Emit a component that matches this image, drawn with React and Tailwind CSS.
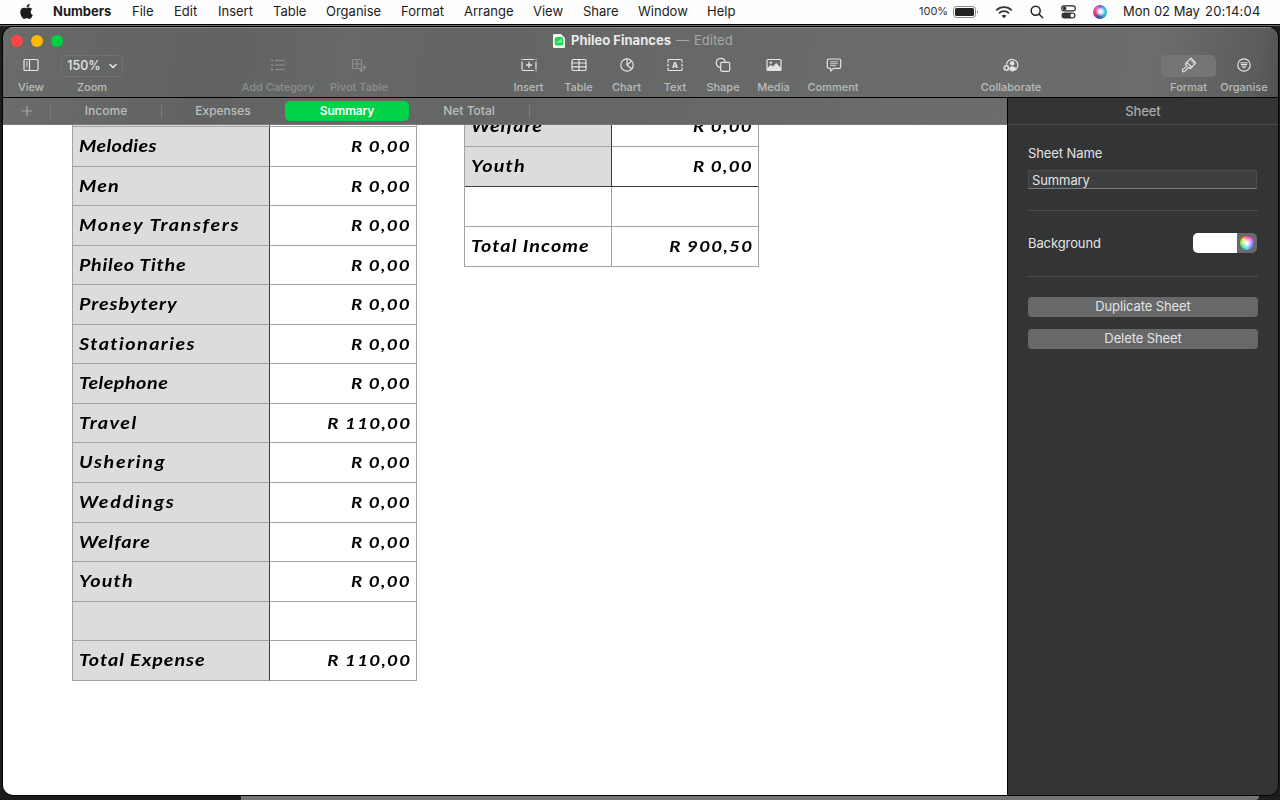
import React from 'react';
import { FaApple } from 'react-icons/fa';

const MENUS = [
    { label: 'File', width: 'w-[42px]' },
    { label: 'Edit', width: 'w-11' },
    { label: 'Insert', width: 'w-[55px]' },
    { label: 'Table', width: 'w-[53px]' },
    { label: 'Organise', width: 'w-[75px]' },
    { label: 'Format', width: 'w-[63px]' },
    { label: 'Arrange', width: 'w-[69px]' },
    { label: 'View', width: 'w-[50px]' },
    { label: 'Share', width: 'w-[55px]' },
    { label: 'Window', width: 'w-[69px]' },
    { label: 'Help', width: 'w-10' },
];

const EXPENSES = [
    { name: 'Melodies', amount: 'R 0,00', height: 'h-10', tracking: 'tracking-[0.3px]' },
    { name: 'Men', amount: 'R 0,00', height: 'h-[39px]', tracking: 'tracking-[1px]' },
    { name: 'Money Transfers', amount: 'R 0,00', height: 'h-10', tracking: 'tracking-[1.4px]' },
    { name: 'Phileo Tithe', amount: 'R 0,00', height: 'h-[39px]', tracking: 'tracking-[0.6px]' },
    { name: 'Presbytery', amount: 'R 0,00', height: 'h-10', tracking: 'tracking-[0.8px]' },
    { name: 'Stationaries', amount: 'R 0,00', height: 'h-[39px]', tracking: 'tracking-[1.2px]' },
    { name: 'Telephone', amount: 'R 0,00', height: 'h-10', tracking: 'tracking-[0.4px]' },
    { name: 'Travel', amount: 'R 110,00', height: 'h-[39px]', tracking: 'tracking-[1.2px]' },
    { name: 'Ushering', amount: 'R 0,00', height: 'h-10', tracking: 'tracking-[1.4px]' },
    { name: 'Weddings', amount: 'R 0,00', height: 'h-10', tracking: 'tracking-[1.5px]' },
    { name: 'Welfare', amount: 'R 0,00', height: 'h-[39px]', tracking: 'tracking-[0.8px]' },
    { name: 'Youth', amount: 'R 0,00', height: 'h-10', tracking: 'tracking-[1px]' },
    { name: '', amount: '', height: 'h-[39px]', tracking: '' },
    { name: 'Total Expense', amount: 'R 110,00', height: 'h-10', tracking: 'tracking-[0.8px]' },
];

const HAND = "font-['Bradley_Hand',Lato,sans-serif] leading-none font-bold italic text-black whitespace-pre";

function Icon({ children, className = 'mb-[2px]' }) {
    return (
        <svg
            width="18"
            height="18"
            viewBox="0 0 18 18"
            fill="none"
            stroke="currentColor"
            strokeWidth="1.2"
            strokeLinecap="round"
            strokeLinejoin="round"
            className={`shrink-0 ${className}`}
        >
            {children}
        </svg>
    );
}

function MenuBar() {
    return (
        <div className="flex h-6 items-center bg-[#fdfdfd] pb-px text-[13px] leading-none text-[#1c1c1c]">
            <FaApple className="ml-[19px] mb-px w-[15px] h-[17px] shrink-0" />
            <span className="ml-[19px] w-[79px] shrink-0 font-bold">Numbers</span>
            {MENUS.map((m) => (
                <span key={m.label} className={`${m.width} shrink-0 whitespace-nowrap`}>{m.label}</span>
            ))}
            <span className="ml-auto w-[34px] text-[11px] text-[#333]">100%</span>
            <svg width="26" height="12" viewBox="0 0 26 12" className="shrink-0">
                <rect x="0.5" y="0.5" width="22" height="11" rx="3" fill="none" stroke="#888" />
                <rect x="2" y="2" width="19" height="8" rx="1.6" fill="#222" />
                <path d="M24.2 4.2c1.2.4 1.2 3.2 0 3.6z" fill="#777" />
            </svg>
            <svg width="18" height="14" viewBox="0 0 18 14" fill="none" stroke="#333" strokeWidth="1.7" className="ml-4 shrink-0">
                <path d="M1.2 5.3a11 11 0 0 1 15.6 0M4 8.3a7 7 0 0 1 10 0" />
                <path d="M6.6 10.8a3.5 3.5 0 0 1 4.8 0L9 13.2z" fill="#333" stroke="none" />
            </svg>
            <svg width="14" height="14" viewBox="0 0 14 14" fill="none" stroke="#222" strokeWidth="1.5" strokeLinecap="round" className="ml-[17px] shrink-0">
                <circle cx="5.7" cy="5.7" r="4.5" />
                <path d="M9.2 9.2l3.5 3.5" />
            </svg>
            <svg width="15" height="14" viewBox="0 0 15 14" className="ml-[17px] shrink-0">
                <rect x="0.7" y="0.9" width="13.6" height="5" rx="2.5" fill="none" stroke="#222" strokeWidth="1.1" />
                <circle cx="3.6" cy="3.4" r="1.8" fill="#333" />
                <rect x="0.5" y="7.5" width="14" height="6" rx="3" fill="#333" />
                <circle cx="11.3" cy="10.5" r="1.9" fill="#eee" />
            </svg>
            <span className="ml-[17px] flex size-[14px] shrink-0 items-center justify-center rounded-full bg-[conic-gradient(#6f5bd0,#35a7e8_12%,#2cc7e0_28%,#2f8fb8_42%,#3a4f9e_54%,#c0307a_66%,#f0459a_80%,#e055b0_90%,#6f5bd0)]">
                <span className="size-[7px] rounded-full bg-[#f3f5ff] blur-[1px]" />
            </span>
            <span className="ml-4 w-[82px] shrink-0 whitespace-nowrap">Mon 02 May</span>
            <span className="w-[75px] shrink-0 whitespace-nowrap tracking-[0.2px]">20:14:04</span>
        </div>
    );
}

function Tool({ label, className, dim, boxed, children }) {
    return (
        <div className={`flex shrink-0 flex-col items-center ${className} ${dim ? 'text-[#8c8e8d]' : 'text-[#e4e4e4]'}`}>
            <div className={`flex h-[22px] w-full items-center justify-center rounded-[5px] ${boxed ? 'bg-[#747675]' : ''}`}>
                {children}
            </div>
            <span className={`mt-[4px] text-[11px] leading-[13px] font-medium whitespace-nowrap ${dim ? 'text-[#8c8e8d]' : 'text-[#b9bbba]'}`}>{label}</span>
        </div>
    );
}

function Toolbar() {
    return (
        <div className="flex h-[42px]">
            <Tool label="View" className="w-14">
                <Icon>
                    <rect x="2" y="3.5" width="14" height="11" rx="1" />
                    <path d="M7.5 3.5v11M4.3 6h1M4.300 8h1M4.300 10h1" />
                </Icon>
            </Tool>
            <Tool label="Zoom" className="w-[66px]">
                <div className="flex h-[22px] w-[62px] items-center justify-center gap-[8px] rounded-[5px] border border-[#727473] text-[12.500px] font-medium">
                    150%
                    <svg width="8" height="6" viewBox="0 0 8 6" fill="none" stroke="currentColor" strokeWidth="1.6" strokeLinecap="round" strokeLinejoin="round">
                        <path d="M1 1.5l3 3 3-3" />
                    </svg>
                </div>
            </Tool>
            <Tool label="Add Category" className="ml-[113px] w-20" dim>
                <Icon>
                    <path d="M6.5 4.5h9M6.5 9h9M6.5 13.5h9" />
                    <path d="M3 4.5h.2M3 9h.2M3 13.5h.2" strokeWidth="1.8" />
                </Icon>
            </Tool>
            <Tool label="Pivot Table" className="w-[82px]" dim>
                <Icon>
                    <rect x="2.5" y="3.5" width="9" height="9" rx="1" />
                    <path d="M7 3.5v9M2.5 8h9M14.5 10.500v1.500a2.500 2.500 0 0 1-2.500 2.500h-1.500M13.200 11.500l1.300-1.500 1.400 1.500M11.500 13.200l-1.500 1.300 1.500 1.400" />
                </Icon>
            </Tool>
            <Tool label="Insert" className="ml-[104px] w-[49px]">
                <Icon>
                    <path d="M3.5 3.5h10M16 3.500v.2M16 6v7M16 15v-.2M13.500 14.5H3.500A1.500 1.500 0 0 1 2 13V6M2 3.700v-.2" />
                    <path d="M9 6.5v5M6.500 9h5" strokeWidth="1.4" />
                </Icon>
            </Tool>
            <Tool label="Table" className="w-[51px]">
                <Icon>
                    <rect x="2" y="3.5" width="14" height="11" rx="1.2" />
                    <path d="M9 3.5v11M2 7h14M2 10.8h14" />
                </Icon>
            </Tool>
            <Tool label="Chart" className="w-[45px]">
                <Icon>
                    <circle cx="9" cy="9" r="6.2" />
                    <path d="M9 2.8V9l4.700 4M9 9l4.300-3.800" />
                </Icon>
            </Tool>
            <Tool label="Text" className="w-[52px]">
                <Icon className="-mr-[18px] mb-[2px]">
                    <path d="M2 6V4.5a1 1 0 0 1 1-1h12a1 1 0 0 1 1 1V6M16 8v2M16 12v1.5a1 1 0 0 1-1 1H3a1 1 0 0 1-1-1V12M2 10V8" />
                </Icon>
                <span className="mb-[2px] w-[18px] text-center text-[8px] leading-none font-bold">A</span>
            </Tool>
            <Tool label="Shape" className="w-11">
                <Icon>
                    <path d="M6.200 11.300A4.500 4.500 0 1 1 11.200 6" />
                    <rect x="6.7" y="6.3" width="9" height="9" rx="1.2" />
                </Icon>
            </Tool>
            <Tool label="Media" className="w-[57px]">
                <Icon>
                    <rect x="2" y="3.5" width="14" height="11" rx="1" />
                    <path d="M2.5 12l3.3-2.8 2 1.6 3.4-3.5 4.5 4.5v2.4H2.5z" fill="currentColor" strokeWidth="0.5" />
                    <circle cx="5.8" cy="6.7" r="0.9" fill="currentColor" strokeWidth="0.5" />
                </Icon>
            </Tool>
            <Tool label="Comment" className="w-[62px]">
                <Icon className="mb-[2px] ml-[2px]">
                    <path d="M4 3h10a1.7 1.7 0 0 1 1.700 1.700v6A1.700 1.700 0 0 1 14 12.400H8.500L5.700 15.200v-2.800H4a1.700 1.700 0 0 1-1.700-1.700v-6A1.700 1.700 0 0 1 4 3z" />
                    <path d="M5.5 5.8h7M5.5 7.7h7M5.5 9.6h5" strokeWidth="0.8" />
                </Icon>
            </Tool>
            <Tool label="Collaborate" className="ml-[111px] w-[72px]">
                <Icon>
                    <path d="M4.5 8.300a5.700 5.700 0 1 1 5 6.500" />
                    <circle cx="10.2" cy="7.2" r="2.2" fill="currentColor" stroke="none" />
                    <path d="M7.4 14.3c-.3-3 .8-4 2.8-4s3.6 1 4 2.4c-1.5 2-4 2.6-6.8 1.6z" fill="currentColor" stroke="none" />
                    <circle cx="4.4" cy="12" r="3" fill="currentColor" stroke="none" />
                    <path d="M4.4 10.5v3M2.9 12h3" stroke="#666867" strokeWidth="1" />
                </Icon>
            </Tool>
            <Tool label="Format" className="ml-[114px] w-[55px]" boxed>
                <Icon>
                    <path d="M11 2.300l4.700 4.600-3.900 4.200-5-4.700zM12.700 4l-1 1.200M14.200 5.500l-1.200 1.300" />
                    <path d="M6.800 6.400L5.300 8l1.800 1.900-4.300 3.500a1.400 1.400 0 0 0 2 2l4-4.200 1.700 1.500 1.300-1.600" />
                </Icon>
            </Tool>
            <Tool label="Organise" className="w-14">
                <Icon>
                    <circle cx="9" cy="9" r="6.2" />
                    <path d="M5.7 6.9h6.6M6.2 8.5h5.6M6.9 10.1h4.2M7.8 11.7h2.4" strokeWidth="1" />
                </Icon>
            </Tool>
        </div>
    );
}

function TitleBar() {
    return (
        <div className="flex h-7 items-center border-t border-[#8a8c8b] pb-px pl-2">
            <span className="size-3 rounded-full bg-[#ff4644]" />
            <span className="ml-2 size-3 rounded-full bg-[#fdb900]" />
            <span className="ml-2 size-3 rounded-full bg-[#00d13f]" />
            <svg width="12" height="14" viewBox="0 0 12 14" className="ml-[490px] shrink-0">
                <path d="M1 0h7l4 4v9a1 1 0 0 1-1 1H1a1 1 0 0 1-1-1V1a1 1 0 0 1 1-1z" fill="#f4f4f4" />
                <rect x="1.7" y="3" width="8.6" height="8.6" rx="2.5" fill="#12dc4e" />
                <path d="M4 9V7.5M6 9V6.3M8 9V5" stroke="#b9ffd0" strokeWidth="1" />
            </svg>
            <span className="ml-[6px] w-[105px] shrink-0 text-[13px] font-bold whitespace-nowrap text-[#e9e9e9]">Phileo Finances</span>
            <span className="w-[18px] shrink-0 text-[13px] text-[#a5a7a6]">—</span>
            <span className="text-[13px] text-[#a5a7a6]">Edited</span>
        </div>
    );
}

function SheetTabs() {
    return (
        <div className="flex h-[27px] items-center border-b border-[#777978] text-[12px] font-medium text-[#bcbebd]">
            <svg width="10" height="10" viewBox="0 0 10 10" stroke="#a9abaa" strokeWidth="1.2" className="ml-[19px] shrink-0">
                <path d="M5 0v10M0 5h10" />
            </svg>
            <span className="ml-[18px] h-[13px] w-px bg-[#7a7c7b]" />
            <span className="w-[110px] text-center">Income</span>
            <span className="h-[13px] w-px bg-[#7a7c7b]" />
            <span className="w-[122px] text-center">Expenses</span>
            <span className="ml-[1px] flex h-5 w-[124px] items-center justify-center rounded-[5px] bg-[#00d349] font-semibold tracking-[-0.2px] text-white">Summary</span>
            <span className="w-[120px] text-center">Net Total</span>
            <span className="h-[13px] w-px bg-[#7a7c7b]" />
        </div>
    );
}

function Name({ tracking, children }) {
    return (
        <span className={`${HAND} mb-[2px] origin-left scale-x-[1.165] text-[17px] ${tracking}`}>{children}</span>
    );
}

function Amount({ children }) {
    return (
        <span className={`${HAND} origin-right scale-x-125 text-[15px] tracking-[1px]`}>{children}</span>
    );
}

function ExpenseTable() {
    return (
        <div className="ml-[69px] w-[345px] shrink-0 self-start border-x border-[#a3a3a3]">
            <div className="flex h-[2px] border-b border-[#a3a3a3]">
                <div className="w-[197px] border-r border-[#3a3a3a] bg-[#dcdcdc]" />
            </div>
            {EXPENSES.map((row, i) => (
                <div key={i} className={`flex ${row.height}`}>
                    <div className="flex w-[197px] items-center border-r border-b border-r-[#3a3a3a] border-b-[#a3a3a3] bg-[#dcdcdc] pl-[6px]">
                        <Name tracking={row.tracking}>{row.name}</Name>
                    </div>
                    <div className="flex flex-1 items-center justify-end border-b border-[#a3a3a3] pr-[5px]">
                        <Amount>{row.amount}</Amount>
                    </div>
                </div>
            ))}
        </div>
    );
}

function IncomeTable() {
    return (
        <div className="ml-[47px] w-[295px] shrink-0 self-start border-x border-[#a3a3a3]">
            {/* scrolled halfway under the sheet tabs */}
            <div className="flex h-[22px] items-end overflow-hidden">
                <div className="flex h-10 w-[147px] shrink-0 items-center border-r border-b border-r-[#3a3a3a] border-b-[#a3a3a3] bg-[#dcdcdc] pl-[6px]">
                    <Name tracking="tracking-[0.8px]">Welfare</Name>
                </div>
                <div className="flex h-10 flex-1 items-center justify-end border-b border-[#a3a3a3] pr-[5px]">
                    <Amount>R 0,00</Amount>
                </div>
            </div>
            <div className="flex h-10 border-b border-[#3a3a3a]">
                <div className="flex w-[147px] items-center border-r border-[#3a3a3a] bg-[#dcdcdc] pl-[6px]">
                    <Name tracking="tracking-[1px]">Youth</Name>
                </div>
                <div className="flex flex-1 items-center justify-end pr-[5px]">
                    <Amount>R 0,00</Amount>
                </div>
            </div>
            <div className="flex h-10 border-b border-[#a3a3a3]">
                <div className="w-[147px] border-r border-[#a3a3a3]" />
            </div>
            <div className="flex h-10 border-b border-[#a3a3a3]">
                <div className="flex w-[147px] items-center border-r border-[#a3a3a3] pl-[6px]">
                    <Name tracking="tracking-[0.9px]">Total Income</Name>
                </div>
                <div className="flex flex-1 items-center justify-end pr-[5px]">
                    <Amount>R 900,50</Amount>
                </div>
            </div>
        </div>
    );
}

function Inspector() {
    return (
        <aside className="flex w-[271px] shrink-0 flex-col border-l border-black bg-[#333436] text-[13px] tracking-[-0.1px] text-[#e3e3e3]">
            <div className="flex h-[27px] items-center justify-center border-b border-[#4b4c4e] pt-[2px] font-medium text-[#a9aaab]">Sheet</div>
            <div className="flex flex-col px-5">
                <span className="mt-[19px] leading-[18px]">Sheet Name</span>
                <div className="mt-2 mr-px flex h-[19px] items-center border border-[#4a4b4d] border-b-[#7c7d7f] bg-[#3d3e40] pt-[2px] pl-[3px]">Summary</div>
                <div className="mt-[21px] h-px bg-[#4b4c4e]" />
                <div className="mt-[22px] mr-px flex h-5 items-center justify-between">
                    <span className="pt-[2px]">Background</span>
                    <div className="flex h-5 w-16 overflow-hidden rounded-[5px] bg-[#68696b]">
                        <div className="w-11 bg-white" />
                        <div className="flex flex-1 items-center justify-center">
                            <div className="size-[14px] rounded-full bg-[radial-gradient(#fff_10%,#ffffff00_70%),conic-gradient(#ff2d6a,#e040fb_15%,#7a4aff_28%,#4a6dff_38%,#22d3ee_50%,#22e07a_65%,#8bee3a_76%,#ffd11f_87%,#ff2d6a)]" />
                        </div>
                    </div>
                </div>
                <div className="mt-[23px] h-px bg-[#4b4c4e]" />
                <div className="mt-5 flex h-5 items-center justify-center rounded-[4px] bg-[#67686a]">Duplicate Sheet</div>
                <div className="mt-3 flex h-5 items-center justify-center rounded-[4px] bg-[#67686a]">Delete Sheet</div>
            </div>
        </aside>
    );
}

export default function App() {
    return (
        <div className="flex h-[800px] w-[1280px] flex-col overflow-hidden bg-[#1d1d1d] font-[Inter,sans-serif]">
            <MenuBar />
            <div className="h-px shrink-0 bg-black" />
            <div className="h-px shrink-0 bg-[#6b6c6d]" />
            <div className="mr-px ml-[2px] flex h-[770px] shrink-0 overflow-hidden rounded-[11px] border border-black bg-[#333436]">
                <div className="flex w-[1275px] shrink-0 flex-col">
                    <div className="h-[71px] shrink-0 border-b border-black bg-[linear-gradient(100deg,#6a6c6b_0%,#646665_8%,#616362_18%,#676968_27%,#636564_36%,#666867_48%,#696b6a_65%,#6b6d6c_90%,#5b5d5c_98%,#505251_100%)]">
                        <TitleBar />
                        <Toolbar />
                    </div>
                    <div className="flex flex-1">
                        <div className="flex w-[1004px] flex-col bg-white">
                            <div className="bg-[linear-gradient(100deg,#6a6c6b_0%,#616362_20%,#676968_35%,#646665_50%,#6b6d6c_100%)]">
                                <SheetTabs />
                            </div>
                            <div className="flex flex-1">
                                <ExpenseTable />
                                <IncomeTable />
                            </div>
                        </div>
                        <Inspector />
                    </div>
                </div>
            </div>
            <div className="flex flex-1">
                <div className="w-60 bg-[#1c1c1c]" />
                <div className="ml-px w-[1018px] rounded-br-[8px] bg-[#747474]" />
            </div>
        </div>
    );
}
